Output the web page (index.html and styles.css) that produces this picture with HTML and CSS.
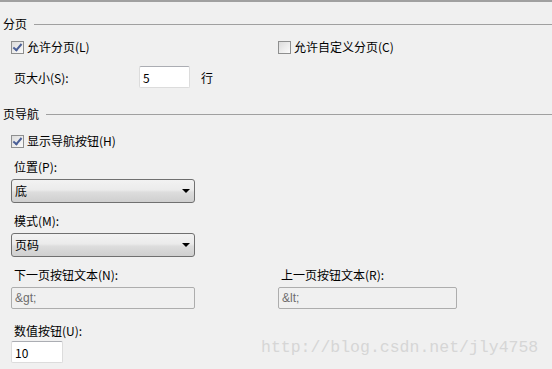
FILE: index.html
```html
<!DOCTYPE html>
<html>
<head>
	<meta charset="utf-8">
	<title>分页设置</title>
	<link rel="stylesheet" href="styles.css">
</head>
<body>
	<div class="panel">
		<!-- paging group -->
		<div class="group-head group-first"><span>分页</span><div class="rule"></div></div>
		<div class="row row-checks">
			<label class="check col-left"><span class="box checked"></span>允许分页(L)</label>
			<label class="check"><span class="box"></span>允许自定义分页(C)</label>
		</div>
		<div class="row row-size">
			<span class="size-label">页大小(S):</span>
			<input class="txt txt-size" value="5">
			<span class="unit">行</span>
		</div>

		<!-- navigation group -->
		<div class="group-head group-second"><span>页导航</span><div class="rule"></div></div>
		<label class="check check-nav"><span class="box checked"></span>显示导航按钮(H)</label>

		<div class="field field-pos">
			<div class="lbl">位置(P):</div>
			<div class="select">底<span class="arrow"></span></div>
		</div>
		<div class="field">
			<div class="lbl">模式(M):</div>
			<div class="select">页码<span class="arrow"></span></div>
		</div>
		<div class="row row-nav">
			<div class="field col-left">
				<div class="lbl">下一页按钮文本(N):</div>
				<div class="txt txt-off">&amp;gt;</div>
			</div>
			<div class="field">
				<div class="lbl">上一页按钮文本(R):</div>
				<div class="txt txt-off txt-wide">&amp;lt;</div>
			</div>
		</div>
		<div class="field field-num">
			<div class="lbl">数值按钮(U):</div>
			<input class="txt txt-num" value="10">
		</div>
	</div>
	<div class="mark">http://blog.csdn.net/jly4758</div>
</body>
</html>
```

FILE: styles.css
```css
	/* whole dialog pane */
	body {
		margin: 0;
		height: 367px;
		overflow: hidden;
		position: relative;
		background-color: #f0f0f0;
		border-top: 2px solid #a0a0a0;
		font-family: "Noto Sans CJK SC", "Noto Sans", sans-serif;
		font-size: 12px;
		color: #000;
	}
	.panel {
		padding-left: 11px;
	}
	/* group titles with a line running to the right edge */
	.group-head {
		display: flex;
		align-items: center;
		height: 16px;
		line-height: 16px;
		margin-left: -8px;
	}
	.group-head span {
		margin-right: 7px;
	}
	.rule {
		flex: 1;
		border-top: 1px solid #a0a0a0;
		margin-top: 1px;
	}
	.group-first {
		margin-top: 14px;
	}
	.group-second {
		margin-top: 18px;
	}
	.row {
		display: flex;
		align-items: center;
	}
	.col-left {
		width: 267px;
	}
	/* checkboxes */
	.check {
		display: flex;
		align-items: center;
		height: 16px;
		line-height: 16px;
	}
	.box {
		box-sizing: border-box;
		width: 13px;
		height: 13px;
		margin-right: 3px;
		border: 1px solid #8e8f8f;
		background: linear-gradient(135deg, #dcdcdc, #fbfbfb);
		position: relative;
	}
	.box.checked::after {
		content: "";
		position: absolute;
		left: 3px;
		top: 0px;
		width: 3px;
		height: 7px;
		border-right: 2px solid #4a5f97;
		border-bottom: 2px solid #4a5f97;
		transform: rotate(40deg);
	}
	.row-checks {
		margin-top: 7px;
	}
	.check-nav {
		margin-top: 11px;
	}
	/* page size row */
	.row-size {
		margin-top: 11px;
		padding-left: 3px;
	}
	.size-label {
		width: 125px;
	}
	.unit {
		margin-left: 11px;
	}
	/* text boxes */
	.txt {
		box-sizing: border-box;
		height: 22px;
		border: 1px solid #dcdcdc;
		border-top-color: #abadb3;
		border-radius: 2px;
		background: #fff;
		font-family: inherit;
		font-size: 12px;
		padding: 0 3px;
		line-height: 20px;
		outline: none;
		margin: 0;
	}
	.txt-size {
		width: 51px;
	}
	.txt-num {
		width: 52px;
	}
	.txt-off {
		width: 184px;
		background: #f0f0f0;
		border: 1px solid #adadad;
		color: #6d6d6d;
		font-family: "Liberation Sans", sans-serif;
	}
	.txt-wide {
		width: 179px;
	}
	/* labelled fields */
	.field {
		margin-top: 10px;
	}
	.field-pos {
		margin-top: 10px;
	}
	.lbl {
		height: 16px;
		line-height: 16px;
		padding-left: 3px;
		margin-bottom: 4px;
	}
	.field-num {
		margin-top: 14px;
	}
	.field-num .lbl {
		margin-bottom: 2px;
	}
	.row-nav {
		align-items: flex-start;
	}
	/* drop-down boxes */
	.select {
		box-sizing: border-box;
		width: 184px;
		height: 24px;
		line-height: 22px;
		padding-left: 3px;
		border: 1px solid #707070;
		border-radius: 3px;
		background: linear-gradient(#f2f2f2 0%, #ebebeb 45%, #dddddd 55%, #cfcfcf 100%);
		position: relative;
	}
	.arrow {
		position: absolute;
		right: 4px;
		top: 9px;
		border-left: 4px solid transparent;
		border-right: 4px solid transparent;
		border-top: 4px solid #000;
	}
	/* blog watermark over the corner */
	.mark {
		position: absolute;
		left: 261px;
		top: 336px;
		font-family: "Liberation Mono", monospace;
		font-size: 16.5px;
		color: #d6d6d6;
	}
```
